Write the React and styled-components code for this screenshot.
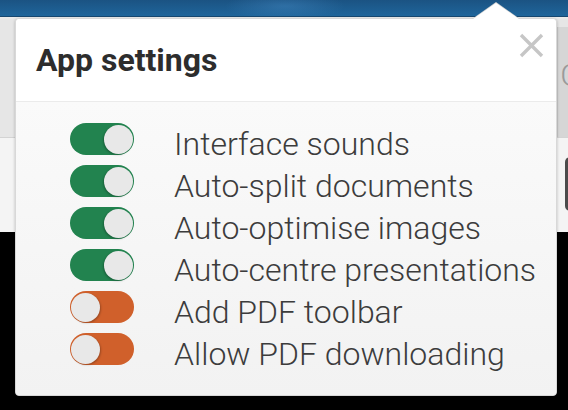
import React, { useState } from "react";
import styled, { createGlobalStyle } from "styled-components";

const GlobalStyle = createGlobalStyle`
  html, body {
    margin: 0;
    padding: 0;
    background: #000;
    font-family: Roboto, "Liberation Sans", sans-serif;
  }
  * { box-sizing: border-box; }
`;

const Page = styled.div`
  position: relative;
  width: 100%;
  height: 410px;
  overflow: hidden;
  display: flex;
  flex-direction: column;
  background: #000;
`;

const TopBar = styled.div`
  height: 17px;
  flex-shrink: 0;
  background:
    radial-gradient(ellipse 60px 14px at 285px 6px, rgba(80, 150, 210, 0.35), transparent),
    linear-gradient(#1b5383, #1f659b);
  border-bottom: 1px solid #174870;
`;

const Toolbar = styled.div`
  height: 121px;
  flex-shrink: 0;
  display: flex;
  justify-content: flex-end;
  align-items: flex-end;
  background: linear-gradient(#ececec 0, #e6e6e6 3px);
  border-bottom: 1px solid #d3d3d3;
`;

const ToolButton = styled.button`
  width: 11px;
  height: 110px;
  padding: 32px 0 0 2px;
  border: none;
  border-left: 1px solid #c9c9c9;
  background: #d6d6d6;
  color: #9a9a9a;
  font-family: "Roboto Light", Roboto, "Liberation Sans", sans-serif;
  font-weight: 300;
  font-size: 32px;
  line-height: 1;
  text-align: left;
  overflow: hidden;
  display: flex;
  align-items: flex-start;
`;

const Content = styled.div`
  height: 94px;
  flex-shrink: 0;
  display: flex;
  justify-content: flex-end;
  align-items: flex-start;
  padding-top: 19px;
  background: #f4f4f4;
`;

const DarkTab = styled.div`
  width: 20px;
  height: 54px;
  margin-right: -17px;
  border-radius: 5px;
  background: #4b4b4b;
`;

const Popup = styled.div`
  position: absolute;
  left: 15px;
  top: 18px;
  width: 542px;
  border: 1px solid #d8d8d8;
  border-radius: 4px;
  background: #fff;
  box-shadow: 0 1px 3px rgba(0, 0, 0, 0.25);

  &::before,
  &::after {
    content: "";
    position: absolute;
    width: 0;
    height: 0;
    border-style: solid;
  }
  &::before {
    left: 456px;
    top: -17px;
    border-width: 0 24px 17px 24px;
    border-color: transparent transparent #d0d0d0 transparent;
  }
  &::after {
    left: 457px;
    top: -16px;
    border-width: 0 23px 16px 23px;
    border-color: transparent transparent #fff transparent;
  }
`;

const Header = styled.div`
  display: flex;
  align-items: flex-start;
  justify-content: space-between;
  padding: 22px 12px 22px 20px;
  border-bottom: 1px solid #ebebeb;
  border-radius: 4px 4px 0 0;
  background: #fff;
`;

const Title = styled.h2`
  margin: 0;
  font-family: Roboto, "Liberation Sans", sans-serif;
  font-weight: 700;
  font-size: 32px;
  line-height: 38px;
  color: #2d2d2d;
`;

const CloseButton = styled.button`
  width: 25px;
  height: 25px;
  margin-top: -8px;
  padding: 0;
  border: none;
  background: none;
  cursor: pointer;
  display: flex;
`;

const Body = styled.div`
  display: flex;
  flex-direction: column;
  padding: 21px 0 20px 54px;
  border-radius: 0 0 4px 4px;
  background: linear-gradient(#fafafa, #f2f2f2);
`;

const Row = styled.label`
  display: flex;
  align-items: flex-start;
  gap: 40px;
  height: 42px;
  cursor: pointer;
`;

const Track = styled.span`
  width: 64px;
  height: 32px;
  flex-shrink: 0;
  display: flex;
  align-items: center;
  justify-content: ${(p) => (p.$on ? "flex-end" : "flex-start")};
  padding: 1px;
  border-radius: 16px;
  background: ${(p) => (p.$on ? "#22834f" : "#d0602b")};
`;

const Knob = styled.span`
  width: 29px;
  height: 29px;
  border-radius: 50%;
  background: #e8e8e8;
  box-shadow: ${(p) => (p.$on ? "-1px 1px 2px" : "1px 1px 2px")} rgba(0, 0, 0, 0.25);
`;

const Label = styled.span`
  font-family: "Roboto Light", Roboto, "Liberation Sans", sans-serif;
  font-weight: 300;
  font-size: 32px;
  line-height: 42px;
  color: #3c3c3c;
  white-space: nowrap;
`;

const initialSettings = [
  { id: "sounds", label: "Interface sounds", on: true },
  { id: "split", label: "Auto-split documents", on: true },
  { id: "optimise", label: "Auto-optimise images", on: true },
  { id: "centre", label: "Auto-centre presentations", on: true },
  { id: "toolbar", label: "Add PDF toolbar", on: false },
  { id: "download", label: "Allow PDF downloading", on: false },
];

function App() {
  const [settings, setSettings] = useState(initialSettings);

  const toggle = (id) => {
    setSettings((prev) =>
      prev.map((s) => (s.id === id ? { ...s, on: !s.on } : s))
    );
  };

  return (
    <>
      <GlobalStyle />
      <Page>
        <TopBar />
        <Toolbar>
          <ToolButton>G</ToolButton>
        </Toolbar>
        <Content>
          <DarkTab />
        </Content>

        <Popup>
          <Header>
            <Title>App settings</Title>
            <CloseButton aria-label="Close">
              <svg width="25" height="25" viewBox="0 0 25 25">
                <path
                  d="M2 2 L23 23 M23 2 L2 23"
                  stroke="#c6c6c6"
                  strokeWidth="3.4"
                  fill="none"
                />
              </svg>
            </CloseButton>
          </Header>
          <Body>
            {settings.map((s) => (
              <Row key={s.id} onClick={() => toggle(s.id)}>
                <Track $on={s.on}>
                  <Knob $on={s.on} />
                </Track>
                <Label>{s.label}</Label>
              </Row>
            ))}
          </Body>
        </Popup>
      </Page>
    </>
  );
}

export default App;
